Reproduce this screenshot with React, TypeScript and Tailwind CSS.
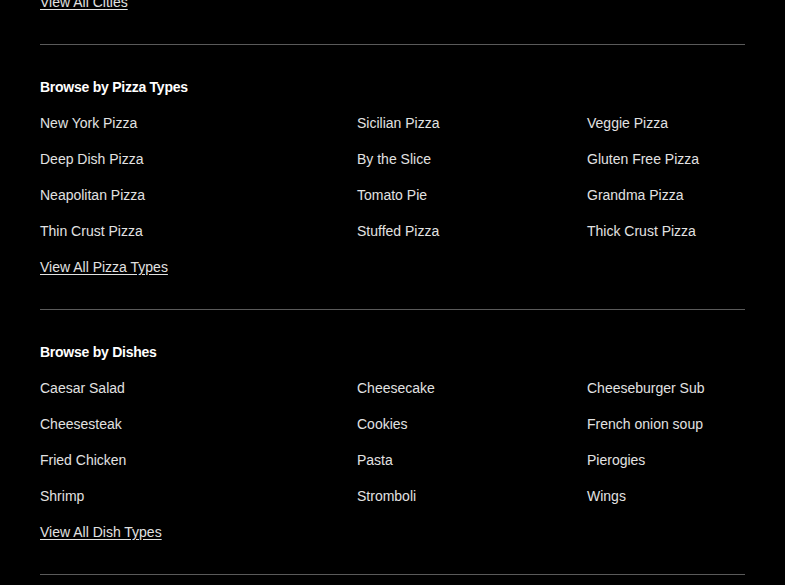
import React from "react";

const pizza = [
  ["New York Pizza", "Sicilian Pizza", "Veggie Pizza"],
  ["Deep Dish Pizza", "By the Slice", "Gluten Free Pizza"],
  ["Neapolitan Pizza", "Tomato Pie", "Grandma Pizza"],
  ["Thin Crust Pizza", "Stuffed Pizza", "Thick Crust Pizza"],
];
const dishRows = [
  ["Caesar Salad", "Cheesecake", "Cheeseburger Sub"],
  ["Cheesesteak", "Cookies", "French onion soup"],
  ["Fried Chicken", "Pasta", "Pierogies"],
  ["Shrimp", "Stromboli", "Wings"],
];

function Section({ title, rows, link }: { title: string; rows: string[][]; link: string }) {
  return (
    <section className="border-t border-[#5a5a5a] pt-8 pb-8">
      <h2 className="text-[14px] leading-5 font-bold text-white mb-4 tracking-[-0.25px]">{title}</h2>
      <div className="grid grid-cols-[317px_230px_1fr] gap-y-4">
        {rows.flat().map((t, i) => (
          <a key={i} className="text-[14px] leading-5 text-[#e2e2e2]">
            {t}
          </a>
        ))}
      </div>
      <a className="block mt-4 text-[14px] leading-5 text-[#e2e2e2] underline underline-offset-2 w-fit">{link}</a>
    </section>
  );
}

export default function App() {
  return (
    <div className="min-h-[585px] bg-black px-10 overflow-hidden" style={{ fontFamily: '"Liberation Sans", Arial, sans-serif' }}>
      <div className="-mt-2 pb-8">
        <a className="block text-[14px] leading-5 text-[#e2e2e2] underline underline-offset-2 w-fit">View All Cities</a>
      </div>
      <Section title="Browse by Pizza Types" rows={pizza} link="View All Pizza Types" />
      <Section title="Browse by Dishes" rows={dishRows} link="View All Dish Types" />
      <div className="border-t border-[#5a5a5a] h-10" />
    </div>
  );
}
